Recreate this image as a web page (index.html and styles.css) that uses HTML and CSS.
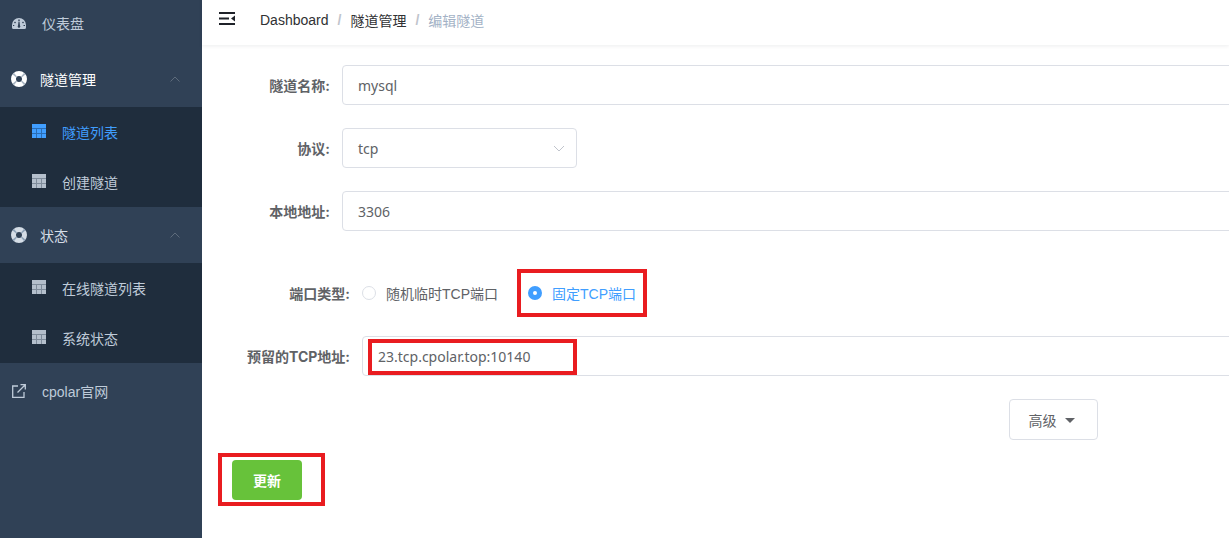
FILE: index.html
```html
<!DOCTYPE html>
<html lang="zh">
<head>
<meta charset="utf-8">
<title>编辑隧道</title>
<link rel="stylesheet" href="styles.css">
</head>
<body>
<svg width="0" height="0" class="defs">
  <symbol id="i-table" viewBox="0 0 14 14"><path fill="currentColor" d="M0 0h14v14H0z"/><path fill="none" stroke="var(--grid)" stroke-width="1" d="M0 4.500h14M0 9.500h14M4.500 4.500V14M9.500 4.500V14"/></symbol>
  <symbol id="i-ring" viewBox="0 0 16 16"><path fill="currentColor" fill-rule="evenodd" d="M8 0a8 8 0 1 1 0 16A8 8 0 0 1 8 0zm0 5a3 3 0 1 0 0 6 3 3 0 0 0 0-6z"/><path fill="var(--notch)" d="M1.400 3.200l3.800 3.200.8-.8-3.200-3.800zM14.600 3.200l-3.800 3.200-.8-.8 3.200-3.800zM1.400 12.800l3.800-3.200.8.8-3.200 3.800zM14.600 12.800l-3.800-3.200-.8.8 3.200 3.800z"/></symbol>
</svg>
<div class="app">
  <aside class="sidebar">
    <div class="item item-first"><svg class="ic-gauge" viewBox="0 0 14 11"><path fill="currentColor" fill-rule="evenodd" d="M7 0a7 7 0 0 1 7 7v2.500a1.500 1.500 0 0 1-1.500 1.500h-11A1.500 1.500 0 0 1 0 9.500V7a7 7 0 0 1 7-7zM7.500 3.500h-1L6 7.600a1.300 1.300 0 1 0 2 0zM3 3.500l-1 1 1 1 1-1zm8 0l-1 1 1 1 1-1zM2 7H1v1h1.500zm10 0h-.5V8H13V7zM6.300 1.500v1.400h1.400V1.500z"/></svg><span>仪表盘</span></div>
    <div class="item item-head"><svg class="ic-ring"><use href="#i-ring"/></svg><span class="head-text">隧道管理</span><svg class="chev" viewBox="0 0 10 6"><path fill="none" stroke="currentColor" d="M.5 5.500 5 1l4.500 4.500"/></svg></div>
    <div class="sub">
      <div class="sub-item active"><svg class="ic-table"><use href="#i-table"/></svg><span>隧道列表</span></div>
      <div class="sub-item"><svg class="ic-table"><use href="#i-table"/></svg><span>创建隧道</span></div>
    </div>
    <div class="item item-head muted"><svg class="ic-ring"><use href="#i-ring"/></svg><span class="head-text">状态</span><svg class="chev" viewBox="0 0 10 6"><path fill="none" stroke="currentColor" d="M.5 5.500 5 1l4.500 4.500"/></svg></div>
    <div class="sub">
      <div class="sub-item"><svg class="ic-table"><use href="#i-table"/></svg><span>在线隧道列表</span></div>
      <div class="sub-item"><svg class="ic-table"><use href="#i-table"/></svg><span>系统状态</span></div>
    </div>
    <div class="item"><svg class="ic-link" viewBox="0 0 14 14"><path fill="none" stroke="currentColor" stroke-width="1.300" d="M6 2H.7v11.300H12V8M5.500 8.500 13 1M8.500 .7h4.800v4.800"/></svg><span class="link-text">cpolar官网</span></div>
  </aside>
  <main class="main">
    <header class="navbar">
      <svg class="burger" viewBox="0 0 16 13"><path fill="#1f2229" d="M0 0h16v2H0zM0 5.500h10v2H0zM0 11h16v2H0zM16 3.500v6L12 6.500z"/></svg>
      <nav class="crumbs"><span class="c-dark">Dashboard</span><i>/</i><span class="c-dark">隧道管理</span><i>/</i><span class="c-light">编辑隧道</span></nav>
    </header>
    <form class="form">
      <div class="row"><label class="lab">隧道名称:</label><div class="input">mysql</div></div>
      <div class="row"><label class="lab">协议:</label><div class="input select">tcp<svg class="arrow" viewBox="0 0 12 7"><path fill="none" stroke="#c0c4cc" d="M1 1l5 5 5-5"/></svg></div></div>
      <div class="row"><label class="lab">本地地址:</label><div class="input">3306</div></div>
      <div class="row row-radio"><label class="lab lab-wide">端口类型:</label>
        <div class="radio"><span class="dot"></span>随机临时TCP端口</div>
        <div class="radio on"><span class="dot"></span>固定TCP端口</div>
      </div>
      <div class="row row-addr"><label class="lab lab-wide">预留的TCP地址:</label><div class="input input-addr">23.tcp.cpolar.top:10140</div></div>
      <div class="adv-wrap"><button type="button" class="adv">高级<span class="caret"></span></button></div>
      <button type="button" class="save">更新</button>
    </form>
    <div class="mark mark-radio"></div>
    <div class="mark mark-addr"></div>
    <div class="mark mark-save"></div>
  </main>
</div>
</body>
</html>
```
FILE: styles.css
```css
* { box-sizing: border-box; }
html, body { margin: 0; height: 100%; overflow: hidden; }
body { font-family: "Liberation Sans", "Noto Sans CJK SC", sans-serif; font-size: 14px; background: #fff; }
.defs { position: absolute; }
.app { display: flex; width: 1229px; height: 538px; overflow: hidden; }
.sidebar { width: 202px; flex: none; background: #304156; color: #bfcbd9; margin: 0; }
.item { height: 56px; display: flex; align-items: center; padding-left: 12px; }
.item-first { height: 56px; margin-top: -5px; }
.item-head { color: #fff; --notch: #aab6c3; }
.item-head.muted { color: #d5dde6; --notch: #8fa3b8; }
.ic-gauge { width: 14px; height: 11px; margin-right: 16px; color: #bfcbd9; }
.ic-ring { width: 16px; height: 16px; margin-right: 12px; flex: none; margin-left: -1px; }
.ic-link { width: 14px; height: 14px; margin-right: 16px; }
.head-text { flex: none; width: 129px; margin-left: 1px; }
.chev { width: 10px; height: 6px; color: #5d6b7b; margin-left: 1px; margin-bottom: 1px; }
.sub { background: #1f2d3d; }
.sub-item { height: 50px; display: flex; align-items: center; padding-left: 32px; --grid: #7f8c9b; color: #bfcbd9; }
.sub-item.active { color: #409eff; --grid: #2a6db5; }
.ic-table { width: 14px; height: 14px; margin-right: 16px; color: #b4bfcc; margin-bottom: 2px; }
.active .ic-table { color: #409eff; }
.main { flex: 1; position: relative; min-width: 0; }
.navbar { height: 45px; display: flex; align-items: center; padding-left: 17px; background: #fff; box-shadow: 0 1px 4px rgba(0, 21, 41, .08); }
.burger { width: 16px; height: 13px; margin-bottom: 8px; }
.crumbs { margin-left: 25px; display: flex; align-items: center; height: 45px; padding-bottom: 5px; }
.crumbs i { font-style: normal; color: #c0c4cc; margin: 0 9px; font-weight: 700; }
.c-dark { color: #303133; }
.c-light { color: #a3b2c6; }
.form { display: flex; flex-direction: column; padding-top: 20px; font-family: "Noto Sans", "Noto Sans CJK SC", sans-serif; }
.row { display: flex; align-items: center; height: 40px; margin-bottom: 23px; flex: none; }
.lab { width: 128px; text-align: right; color: #606266; font-weight: 700; font-size: 14px; margin-right: 12px; flex: none; font-family: Inter, "Noto Sans CJK SC", sans-serif; }
.lab-wide { width: 148px; }
.input { width: 900px; height: 40px; border: 1px solid #dcdfe6; border-radius: 4px; padding: 0 15px; display: flex; align-items: center; color: #606266; font-size: 14px; flex: none; }
.select { width: 235px; justify-content: space-between; padding-right: 11px; }
.arrow { width: 12px; height: 7px; }
.row-radio { margin-top: 18px; margin-bottom: 22px; height: 42px; }
.radio { display: flex; align-items: center; color: #606266; font-size: 14px; margin-right: 30px; white-space: nowrap; font-family: "Liberation Sans", "Noto Sans CJK SC", sans-serif; }
.radio.on { color: #409eff; }
.dot { width: 14px; height: 14px; border: 1px solid #dcdfe6; border-radius: 50%; margin-right: 10px; flex: none; background: #fff; }
.on .dot { border: 5px solid #409eff; }
.row-addr { margin-bottom: 23px; }
.input-addr { width: 880px; }
.adv-wrap { display: flex; padding-left: 807px; margin-bottom: 20px; }
.adv { width: 89px; height: 41px; background: #fff; border: 1px solid #dcdfe6; border-radius: 4px; color: #606266; font-size: 14px; font-family: inherit; padding: 0 4px 0 0; display: flex; align-items: center; justify-content: center; }
.caret { width: 0; height: 0; border: 5px solid transparent; border-top: 5px solid #606266; border-bottom: 0; margin-left: 8px; margin-top: 2px; }
.save { width: 70px; height: 40px; margin-left: 30px; background: #67c23a; color: #fff; border: 0; border-radius: 4px; font-size: 14px; font-weight: 700; font-family: inherit; padding: 0; }
.mark { position: absolute; border: 4px solid #e91c20; }
.mark-radio { left: 315px; top: 269px; width: 130px; height: 48px; }
.mark-addr { left: 166px; top: 339px; width: 209px; height: 36px; }
.mark-save { left: 16px; top: 453px; width: 107px; height: 53px; }
```
